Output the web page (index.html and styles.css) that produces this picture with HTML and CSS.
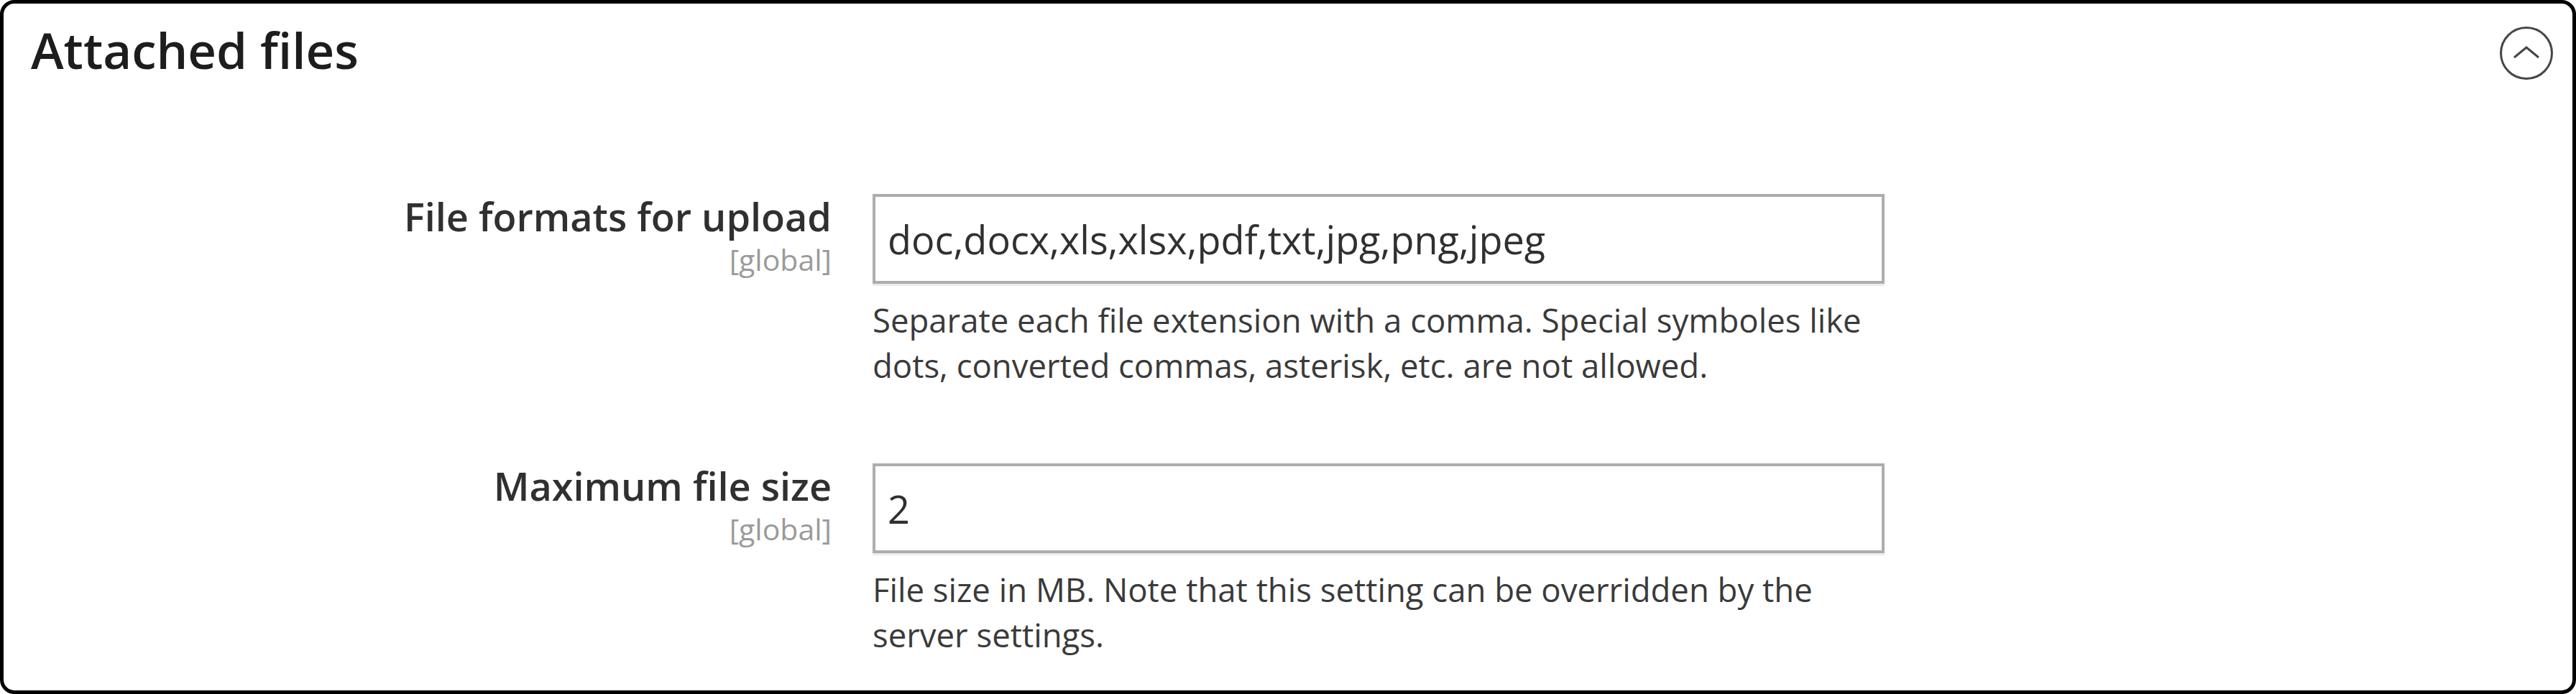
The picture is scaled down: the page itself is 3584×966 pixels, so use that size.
FILE: index.html
```
<!DOCTYPE html>
<html>
<head>
	<title>Attached files</title>
	<link rel="stylesheet" href="styles.css">
</head>
<body>
	<!-- Attached files section -->
	<section class="section">
		<div class="section-title">
			<h2>Attached files</h2>
			<button class="toggle" type="button" aria-label="Collapse">
				<svg width="74" height="74" viewBox="0 0 74 74">
					<circle cx="37" cy="37" r="35.5" fill="none" stroke="#4a4542" stroke-width="3"/>
					<polyline points="20,43 37,29 54,43" fill="none" stroke="#4a4542" stroke-width="3"/>
				</svg>
			</button>
		</div>

		<div class="fieldset">
			<div class="field">
				<label class="field-label" for="file-formats">
					<span>File formats for upload</span>
					<span class="scope">[global]</span>
				</label>
				<div class="field-control">
					<input type="text" id="file-formats" value="doc,docx,xls,xlsx,pdf,txt,jpg,png,jpeg">
					<div class="note">Separate each file extension with a comma. Special symboles like dots, converted commas, asterisk, etc. are not allowed.</div>
				</div>
			</div>

			<div class="field">
				<label class="field-label" for="max-size">
					<span>Maximum file size</span>
					<span class="scope">[global]</span>
				</label>
				<div class="field-control">
					<input type="text" id="max-size" value="2">
					<div class="note">File size in MB. Note that this setting can be overridden by the server settings.</div>
				</div>
			</div>
		</div>
	</section>
</body>
</html>
```

FILE: styles.css
```
html, body {
	margin: 0;
	padding: 0;
	background: #fff;
}

body {
	font-family: "Open Sans", "Liberation Sans", sans-serif;
	color: #303030;
}

.section {
	box-sizing: border-box;
	width: 3584px;
	height: 966px;
	border: 5px solid #000;
	border-radius: 20px;
	background: #fff;
}

.section-title {
	display: flex;
	justify-content: space-between;
	align-items: flex-start;
	padding: 21px 27px 0 38px;
}

.section-title h2 {
	margin: 0;
	font-size: 69px;
	font-weight: 600;
	line-height: 86px;
	color: #1d1d1d;
}

.toggle {
	width: 74px;
	height: 74px;
	margin-top: 11px;
	padding: 0;
	border: none;
	background: none;
	cursor: pointer;
}

.toggle svg {
	display: block;
}

.fieldset {
	padding-top: 158px;
}

.field {
	display: flex;
	align-items: flex-start;
	gap: 57px;
	margin-bottom: 105px;
}

.field-label {
	display: flex;
	flex-direction: column;
	align-items: flex-end;
	width: 1152px;
	margin-top: -2px;
	font-size: 54px;
	font-weight: 600;
	line-height: 67px;
	color: #303030;
	text-align: right;
}

.field-label .scope {
	margin-top: 2px;
	font-size: 41px;
	font-weight: 400;
	line-height: 48px;
	color: #9a9a9a;
}

.field-control {
	width: 1408px;
}

.field-control input {
	box-sizing: border-box;
	display: block;
	width: 100%;
	height: 125px;
	margin: 0;
	padding: 0 17px;
	border: 4px solid #adadad;
	border-radius: 0;
	box-shadow: 0 3px 0 #ececec;
	font-family: "Open Sans", "Liberation Sans", sans-serif;
	font-size: 54px;
	color: #303030;
	outline: none;
}

.note {
	margin-top: 19px;
	font-size: 45.5px;
	line-height: 63px;
	color: #3a3a3a;
}
```
